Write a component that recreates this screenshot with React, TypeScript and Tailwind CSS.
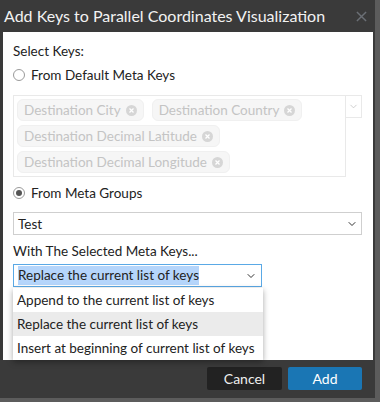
import { ChevronDown } from 'lucide-react';

const tags = [
  ['Destination City', 'Destination Country'],
  ['Destination Decimal Latitude'],
  ['Destination Decimal Longitude'],
];

const options = [
  'Append to the current list of keys',
  'Replace the current list of keys',
  'Insert at beginning of current list of keys',
];

function Radio({ checked, label }: { checked?: boolean; label: string }) {
  return (
    <label className="flex items-center gap-[6px] text-[13.5px] leading-[18px] text-[#222]">
      <span className="w-[12px] h-[12px] rounded-full border border-[#9a9a9a] bg-white flex items-center justify-center">
        {checked && <span className="w-[6px] h-[6px] rounded-full bg-[#555]" />}
      </span>
      {label}
    </label>
  );
}

function Tag({ text }: { text: string }) {
  return (
    <span className="flex items-center gap-[5px] h-[22px] px-[6px] rounded-[6px] bg-[#f6f6f6] border border-[#f0f0f0] text-[13.5px] leading-[18px] text-[#c4c4c4]">
      {text}
      <span className="w-[11px] h-[11px] rounded-full bg-[#d6d6d6] flex items-center justify-center">
        <svg width="7" height="7" viewBox="0 0 7 7">
          <path d="M1.5 1.5L5.5 5.5M5.5 1.5L1.5 5.5" stroke="#fff" strokeWidth="1.3" />
        </svg>
      </span>
    </span>
  );
}

export default function App() {
  return (
    <div
      className="w-[380px] h-[402px] bg-[#5c5c5c] overflow-hidden"
      style={{ fontFamily: 'Lato, "Open Sans", sans-serif' }}
    >
      <div className="w-[375px] h-[398px] bg-[#3a3a3a] flex flex-col">
        {/* Title bar */}
        <div className="h-[32px] flex items-center justify-between pl-[4px] pr-[8px]">
          <span className="text-[16px] leading-[20px] text-[#f2f2f2]">Add Keys to Parallel Coordinates Visualization</span>
          <svg width="11" height="11" viewBox="0 0 12 12">
            <path d="M1 1L11 11M11 1L1 11" stroke="#6b6f75" strokeWidth="1.6" />
          </svg>
        </div>

        {/* Body */}
        <div className="relative mx-[3px] w-[370px] h-[328px] bg-white px-[10px] pt-[10px] text-[13.5px] leading-[18px] text-[#222]">
          <div>Select Keys:</div>
          <div className="mt-[6px]">
            <Radio label="From Default Meta Keys" />
          </div>

          <div className="mt-[11px] flex">
            <div className="w-[333px] h-[82px] border border-[#e9e9e9] px-[3px] pt-[3px] flex flex-col gap-[4px]">
              {tags.map((row, i) => (
                <div key={i} className="flex gap-[8px]">
                  {row.map((t) => (
                    <Tag key={t} text={t} />
                  ))}
                </div>
              ))}
            </div>
            <div className="w-[16px] h-[23px] border border-l-0 border-[#e9e9e9] flex items-center justify-center">
              <ChevronDown size={11} className="text-[#bbb]" strokeWidth={1.5} />
            </div>
          </div>

          <div className="mt-[7px]">
            <Radio checked label="From Meta Groups" />
          </div>

          <div className="mt-[10px] w-[349px] h-[23px] border border-[#cfcfcf] flex items-center justify-between pl-[4px] pr-[3px]">
            <span>Test</span>
            <ChevronDown size={12} className="text-[#333]" strokeWidth={2} />
          </div>

          <div className="mt-[7px]">With The Selected Meta Keys...</div>

          <div className="mt-[4px] w-[249px] h-[23px] border border-[#5aa9e6] flex items-center justify-between pl-[4px] pr-[4px]">
            <span className="bg-[#b5d5fb] leading-[19px]">Replace the current list of keys</span>
            <ChevronDown size={12} className="text-[#333]" strokeWidth={2} />
          </div>

          {/* Open dropdown */}
          <div className="absolute left-[10px] top-[256px] w-[250px] bg-white shadow-[0_2px_6px_rgba(0,0,0,0.35)]">
            {options.map((o, i) => (
              <div
                key={o}
                className={`h-[24px] flex items-center px-[4px] whitespace-nowrap ${i === 1 ? 'bg-[#ebebeb]' : ''}`}
              >
                {o}
              </div>
            ))}
          </div>
        </div>

        {/* Footer */}
        <div className="flex justify-end gap-[6px] pr-[13px] pt-[7px]">
          <button className="w-[75px] h-[23px] bg-[#222] text-[#eee] text-[14px] rounded-[2px]">Cancel</button>
          <button className="w-[74px] h-[23px] bg-[#1a76b4] text-white text-[14px] rounded-[2px]">Add</button>
        </div>
      </div>
    </div>
  );
}
